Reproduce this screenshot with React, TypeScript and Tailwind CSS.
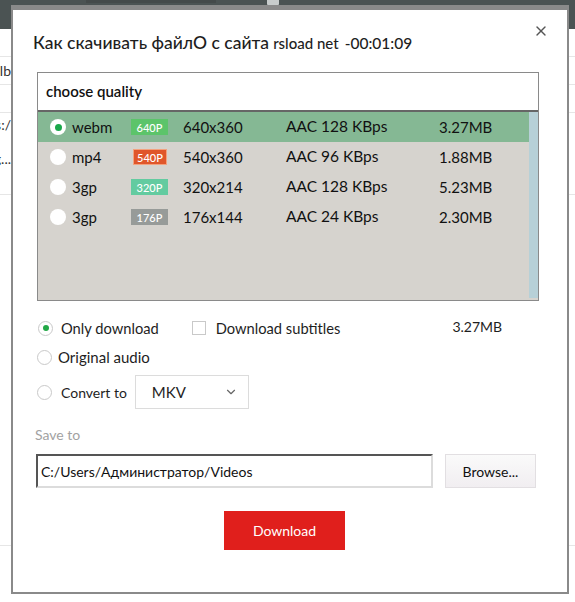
import React from 'react';
import { ChevronDown, X } from 'lucide-react';

interface Row {
  fmt: string;
  badge: string;
  badgeCls: string;
  res: string;
  audio: string;
  size: string;
  selected?: boolean;
}

const rows: Row[] = [
  { fmt: 'webm', badge: '640P', badgeCls: 'bg-[#5cc46a] w-[37px]', res: '640x360', audio: 'AAC 128 KBps', size: '3.27MB', selected: true },
  { fmt: 'mp4', badge: '540P', badgeCls: 'bg-[#e0562a] border border-[#f2a27f] w-[34px] ml-[2px]', res: '540x360', audio: 'AAC 96 KBps', size: '1.88MB' },
  { fmt: '3gp', badge: '320P', badgeCls: 'bg-[#63cba0] w-[37px]', res: '320x214', audio: 'AAC 128 KBps', size: '5.23MB' },
  { fmt: '3gp', badge: '176P', badgeCls: 'bg-[#979b99] w-[37px]', res: '176x144', audio: 'AAC 24 KBps', size: '2.30MB' },
];

const font = "font-['Lato','Liberation_Sans',sans-serif]";

const SmallRadio = ({ checked }: { checked?: boolean }) => (
  <span className="w-[15px] h-[15px] rounded-full border border-[#c9c9c9] bg-white flex items-center justify-center shrink-0">
    {checked && <span className="w-[6px] h-[6px] rounded-full bg-[#22a846]" />}
  </span>
);

const Cut = ({ text }: { text: string }) => (
  <div className="w-[11px] h-[18px] overflow-hidden flex justify-end items-center">
    <span className="whitespace-nowrap text-[14px] text-[#333]">{text}</span>
  </div>
);

export default function App() {
  return (
    <div className={`relative w-[575px] h-[602px] overflow-hidden bg-white ${font}`}>
      {/* page behind the dialog */}
      <div className="flex flex-col">
        <div className="h-[29px] bg-[#4b5353] flex items-end overflow-hidden pb-[26px]">
          <span className="text-white text-[24px] font-bold leading-none ml-[-60px] whitespace-nowrap">rsload.net</span>
          <div className="ml-[40px] w-[130px] h-[40px] bg-[#444a4a] flex justify-center">
            <svg width="22" height="22" viewBox="0 0 22 22" className="mt-[12px]">
              <circle cx="11" cy="11" r="8" fill="none" stroke="#c8cccc" strokeWidth="2" />
            </svg>
          </div>
          <svg width="14" height="10" viewBox="0 0 14 10" className="ml-[50px] mb-[-4px]">
            <rect x="1" y="0" width="12" height="8" rx="1" fill="#c8cccc" />
          </svg>
        </div>
        <div className="h-[28px] border-b border-[#e6e6e6]" />
        <div className="h-[28px] border-b border-[#e6e6e6] flex items-center">
          <Cut text="lb" />
        </div>
        <div className="h-[28px] border-b border-[#e6e6e6]" />
        <div className="h-[82px] border-b border-[#e6e6e6] flex flex-col pt-[2px] gap-[16px]">
          <Cut text="https:/" />
          <Cut text="ng..." />
        </div>
        <div className="h-[351px] border-b border-[#e6e6e6]" />
      </div>

      {/* dialog */}
      <div className="absolute left-[11px] top-[5px] w-[558px] h-[589px] bg-white border-2 border-t-[5px] border-[#8a8a8a] flex flex-col">
        <button className="absolute top-[13px] right-[18px] text-[#555]">
          <X className="w-[16px] h-[16px]" strokeWidth={2} />
        </button>
        <div className="pt-[23px] pl-[20px] h-[43px] leading-[20px] font-medium text-[#1e1e1e] whitespace-nowrap">
          <span className="text-[17.5px]">Как скачивать файлО с сайта</span>{' '}
          <span className="text-[15px]">rsload net</span>{' '}
          <span className="text-[15.5px] ml-[2px]">-00:01:09</span>
        </div>

        {/* quality list */}
        <div className="mt-[19px] ml-[24px] w-[502px] border border-[#8a8a8a] flex flex-col">
          <div className="h-[39px] border-b-2 border-[#666] flex items-center pl-[8px] text-[15px] font-semibold text-[#111]">
            choose quality
          </div>
          <div className="h-[188px] flex bg-[#d6d3ce]">
            <div className="flex-1 flex flex-col">
              {rows.map((r, i) => (
                <div
                  key={i}
                  className={`h-[30px] flex items-center text-[15px] text-[#111] ${r.selected ? 'bg-[#85b894]' : ''}`}
                >
                  <span className="ml-[12px] w-[16px] h-[16px] rounded-full bg-white flex items-center justify-center shrink-0">
                    {r.selected && <span className="w-[7px] h-[7px] rounded-full bg-[#1aa84b]" />}
                  </span>
                  <span className="ml-[6px] w-[59px]">{r.fmt}</span>
                  <span className={`h-[16px] ${r.badgeCls} text-white text-[11px] font-medium leading-none flex items-center justify-center`}>
                    {r.badge}
                  </span>
                  <span className="absolute ml-[145px]">{r.res}</span>
                  <span className="absolute ml-[248px] text-[15.5px]">{r.audio}</span>
                  <span className="absolute ml-[401px]">{r.size}</span>
                </div>
              ))}
            </div>
            <div className="w-[9px] bg-[#b7d0d7] mb-[2px]" />
          </div>
        </div>

        {/* options */}
        <div className="mt-[17px] ml-[25px] h-[20px] flex items-center text-[15px] text-[#1e1e1e]">
          <SmallRadio checked />
          <span className="ml-[8px] text-[14.7px]">Only download</span>
          <span className="ml-[33px] w-[14px] h-[14px] border border-[#c9c9c9] bg-white" />
          <span className="ml-[10px] text-[14.7px]">Download subtitles</span>
          <span className="ml-[112px] mb-[4px] text-[14px]">3.27MB</span>
        </div>
        <div className="mt-[9px] ml-[24px] h-[20px] flex items-center text-[15px] text-[#1e1e1e]">
          <SmallRadio />
          <span className="ml-[6px]">Original audio</span>
        </div>
        <div className="mt-[8px] ml-[24px] h-[34px] flex items-center text-[15px] text-[#1e1e1e]">
          <SmallRadio />
          <span className="ml-[9px] text-[14px]">Convert to</span>
          <div className="ml-[8px] w-[114px] h-[34px] border border-[#dcdcdc] flex items-center pl-[16px] pr-[10px] justify-between">
            <span>MKV</span>
            <ChevronDown className="w-[14px] h-[14px] text-[#666]" strokeWidth={2} />
          </div>
        </div>

        {/* save to */}
        <div className="mt-[16px] ml-[22px] h-[18px] flex items-center text-[14px] text-[#a2a2a2]">Save to</div>
        <div className="mt-[11px] ml-[23px] flex items-center">
          <div className="w-[397px] h-[34px] border-2 border-t-[#555] border-l-[#555] border-b-[#dcdcdc] border-r-[#dcdcdc] flex items-center pl-[3px] text-[14px] text-[#111]">
            C:/Users/Администратор/Videos
          </div>
          <button className="ml-[12px] w-[91px] h-[34px] border border-[#e2dfe2] bg-gradient-to-b from-[#fafafa] to-[#f1eef1] text-[14px] text-[#111]">
            Browse...
          </button>
        </div>

        <button className="mt-[23px] ml-[211px] w-[121px] h-[39px] bg-[#e01f1c] text-white text-[14px]">Download</button>
      </div>
    </div>
  );
}
